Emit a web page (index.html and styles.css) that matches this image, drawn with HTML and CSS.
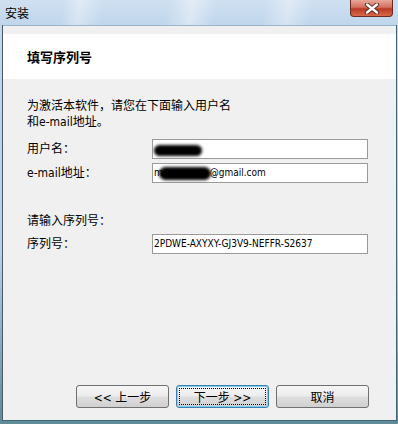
FILE: index.html
```html
<!DOCTYPE html>
<html lang="zh-CN">
<head>
    <meta charset="UTF-8">
    <title>安装</title>
    <link rel="stylesheet" href="styles.css">
</head>
<body>
    <div class="window">
        <div class="titlebar">
            <span class="title">安装</span>
            <div class="close-btn">
                <svg width="16" height="11" viewBox="0 0 16 11">
                    <path d="M3 1.5 L13 9.5 M13 1.5 L3 9.5" stroke="#5a2a22" stroke-width="4.2" stroke-linecap="round"/>
                    <path d="M3 1.5 L13 9.5 M13 1.5 L3 9.5" stroke="#ffffff" stroke-width="2.4" stroke-linecap="round"/>
                </svg>
            </div>
        </div>
        <div class="client">
            <div class="top-strip"></div>
            <div class="header">填写序列号</div>
            <div class="body">
                <p class="intro">为激活本软件，请您在下面输入用户名<br>和e-mail地址。</p>
                <div class="field-row">
                    <label>用户名：</label>
                    <div class="textbox"><span class="blob blob-name"></span></div>
                </div>
                <div class="field-row">
                    <label>e-mail地址：</label>
                    <div class="textbox">m<span class="blob blob-mail"></span>@gmail.com</div>
                </div>
                <p class="serial-label">请输入序列号：</p>
                <div class="field-row">
                    <label>序列号：</label>
                    <div class="textbox">2PDWE-AXYXY-GJ3V9-NEFFR-S2637</div>
                </div>
                <div class="buttons">
                    <div class="btn">&lt;&lt; 上一步</div>
                    <div class="btn btn-default"><span class="focus">下一步 &gt;&gt;</span></div>
                    <div class="btn">取消</div>
                </div>
            </div>
        </div>
    </div>
</body>
</html>
```

FILE: styles.css
```css
body, html {
    margin: 0;
    padding: 0;
    width: 398px;
    height: 424px;
    overflow: hidden;
    font-family: "DejaVu Sans Condensed", "Noto Sans CJK SC", sans-serif;
    font-size: 12px;
    color: #000;
}
.window {
    width: 398px;
    height: 424px;
    box-sizing: border-box;
    display: flex;
    flex-direction: column;
    padding: 0 1px 3px 2px;
    background: linear-gradient(to bottom, #c3d7ec, #b7cfe8 60%, #5f8c98 99%);
}
.titlebar {
    height: 25px;
    flex: none;
    position: relative;
    margin: 0 -1px 0 -2px;
    background:
        linear-gradient(100deg, transparent 16%, rgba(255,255,255,0.35) 20%, transparent 26%,
            transparent 42%, rgba(255,255,255,0.4) 48%, transparent 54%,
            transparent 66%, rgba(255,255,255,0.35) 72%, transparent 78%),
        linear-gradient(to bottom, #d0e0f1, #c0d6ec);
}
.title {
    position: absolute;
    left: 5px;
    top: 5px;
    font-family: "Noto Sans CJK SC", sans-serif;
    font-size: 12px;
    line-height: 16px;
}
.close-btn {
    position: absolute;
    left: 350px;
    top: 0;
    width: 43px;
    height: 17px;
    box-sizing: border-box;
    border: 1px solid #6b2a22;
    border-top: none;
    border-radius: 0 0 4px 4px;
    background: linear-gradient(to bottom, #e8a89c, #d4705e 45%, #b83a26 55%, #d86a48);
    display: flex;
    justify-content: center;
    align-items: center;
}
.client {
    flex: 1;
    display: flex;
    flex-direction: column;
    background: #f0f0f0;
    border-left: 1px solid #4d5966;
    border-right: 1px solid #3c6876;
    border-bottom: 1px solid #3c6876;
}
.top-strip {
    height: 8px;
    background: #f0f0f0;
    border-top: 1px solid #9cb3c8;
}
.header {
    height: 45px;
    box-sizing: border-box;
    background: #fff;
    padding-left: 24px;
    line-height: 45px;
    font-family: "Noto Sans CJK SC", sans-serif;
    font-size: 13px;
    font-weight: bold;
}
.body {
    flex: 1;
    display: flex;
    flex-direction: column;
    padding: 19px 27px 12px 24px;
}
.intro {
    margin: 0 0 9px;
    line-height: 16px;
}
.serial-label {
    margin: 26px 0 5px;
    line-height: 16px;
}
.field-row {
    display: flex;
    align-items: center;
    margin-bottom: 4px;
}
.field-row label {
    width: 125px;
    flex: none;
    margin-top: -3px;
}
.textbox {
    width: 216px;
    height: 20px;
    box-sizing: border-box;
    border: 1px solid #9a9a9a;
    background: #fff;
    padding-left: 1px;
    line-height: 18px;
    font-size: 10px;
    white-space: nowrap;
    overflow: hidden;
}
.blob {
    display: inline-block;
    background: #000;
    border-radius: 8px;
    filter: blur(1.6px);
    vertical-align: middle;
}
.blob-name {
    width: 48px;
    height: 11px;
    margin-top: 2px;
}
.blob-mail {
    width: 52px;
    height: 13px;
    margin-left: -4px;
    margin-right: -1px;
}
.buttons {
    margin-top: auto;
    display: flex;
    justify-content: flex-end;
    gap: 7px;
}
.btn {
    width: 93px;
    height: 23px;
    box-sizing: border-box;
    border: 1px solid #707070;
    border-radius: 3px;
    background: linear-gradient(to bottom, #f6f6f6, #ececec 48%, #dedede 52%, #d0d0d0);
    display: flex;
    justify-content: center;
    align-items: center;
    font-family: "DejaVu Sans Condensed", "Noto Sans CJK SC", sans-serif;
    font-size: 12px;
}
.btn-default {
    border-color: #3c7fb1;
    box-shadow: inset 0 0 0 1px #7fd0ef;
}
.focus {
    display: flex;
    justify-content: center;
    align-items: center;
    width: 85px;
    height: 15px;
    border: 1px dotted #000;
}
```
